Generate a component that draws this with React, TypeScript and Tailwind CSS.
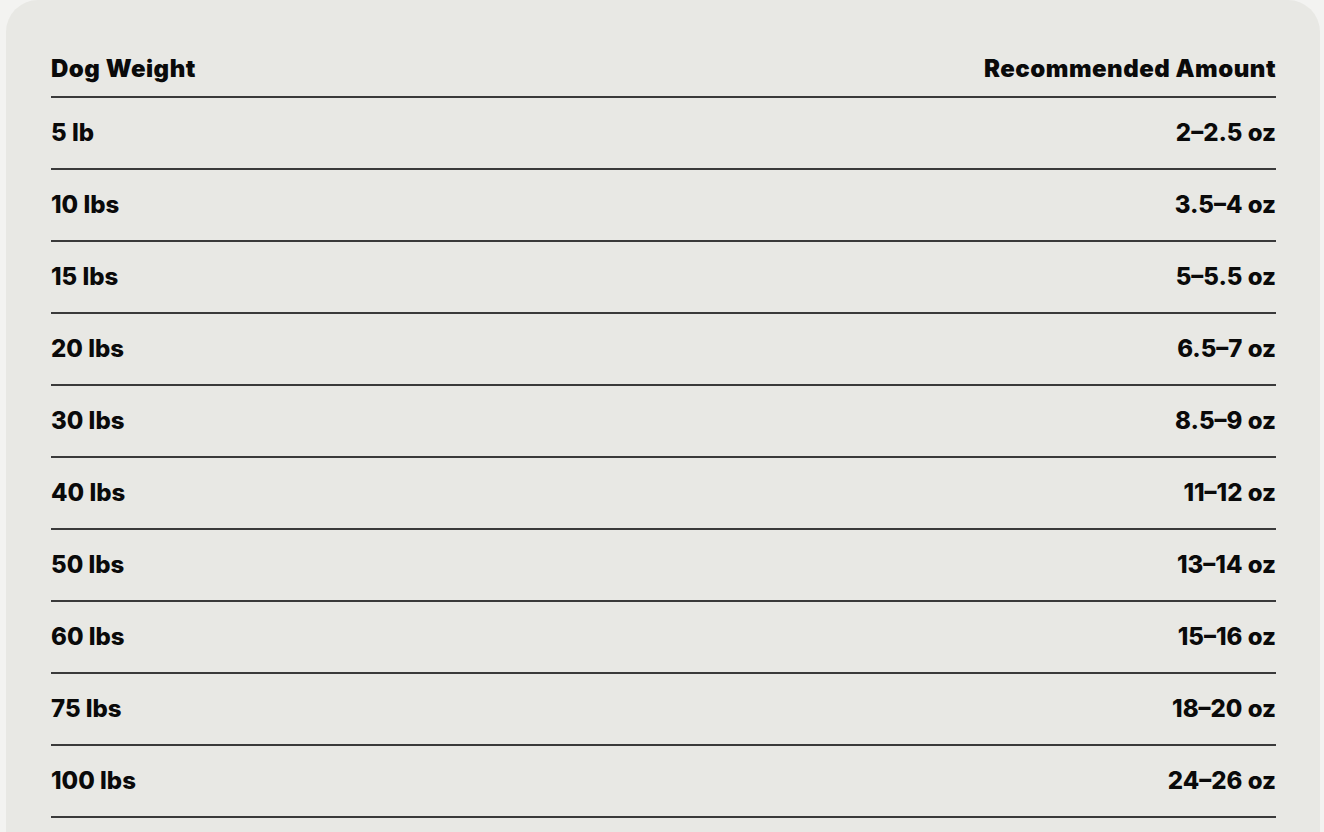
import React from 'react';

const rows = [
  ['5 lb', '2–2.5 oz'],
  ['10 lbs', '3.5–4 oz'],
  ['15 lbs', '5–5.5 oz'],
  ['20 lbs', '6.5–7 oz'],
  ['30 lbs', '8.5–9 oz'],
  ['40 lbs', '11–12 oz'],
  ['50 lbs', '13–14 oz'],
  ['60 lbs', '15–16 oz'],
  ['75 lbs', '18–20 oz'],
  ['100 lbs', '24–26 oz'],
];

export default function App() {
  return (
    <div className="min-h-screen bg-[#f3f3f1] pl-[6px] pr-[4px] font-['Inter',sans-serif] text-[#0a0a0a]">
      <div className="rounded-t-[32px] bg-[#e8e8e4] pl-[45px] pr-[44px] pt-[26px] pb-10">
        <div className="flex h-[72px] items-center justify-between border-b-2 border-[#3a3a3a] pt-[16px] text-[24px] font-black tracking-[0.5px]">
          <span>Dog Weight</span>
          <span>Recommended Amount</span>
        </div>
        {rows.map(([weight, amount]) => (
          <div
            key={weight}
            className="flex h-[72px] items-center justify-between border-b-2 border-[#3a3a3a] text-[24px] font-extrabold"
          >
            <span>{weight}</span>
            <span>{amount}</span>
          </div>
        ))}
      </div>
    </div>
  );
}
